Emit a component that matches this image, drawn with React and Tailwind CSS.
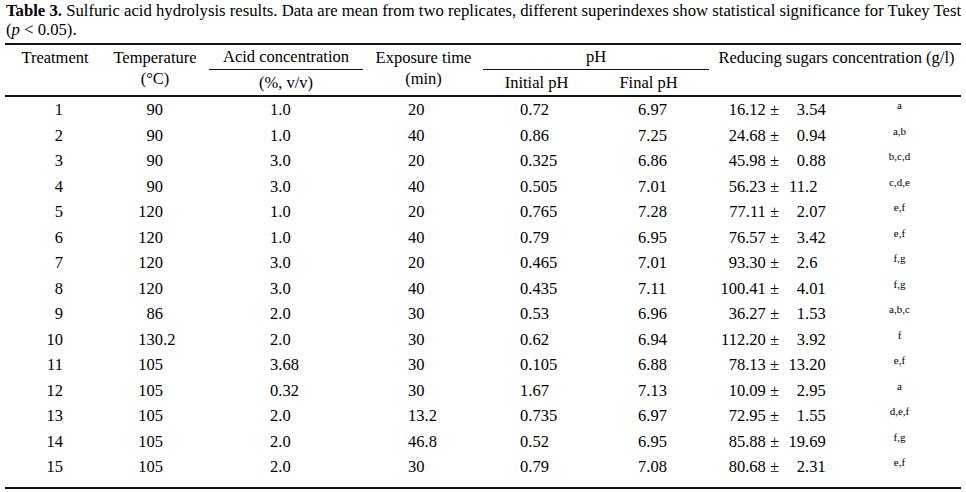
const cols = 'grid grid-cols-[100px_100px_162px_113px_113px_119px_249px]';

const rows = [
  ['1', '90', '1.0', '20', '0.72', '6.97', '16.12', '3.54', 'a'],
  ['2', '90', '1.0', '40', '0.86', '7.25', '24.68', '0.94', 'a,b'],
  ['3', '90', '3.0', '20', '0.325', '6.86', '45.98', '0.88', 'b,c,d'],
  ['4', '90', '3.0', '40', '0.505', '7.01', '56.23', '11.2', 'c,d,e'],
  ['5', '120', '1.0', '20', '0.765', '7.28', '77.11', '2.07', 'e,f'],
  ['6', '120', '1.0', '40', '0.79', '6.95', '76.57', '3.42', 'e,f'],
  ['7', '120', '3.0', '20', '0.465', '7.01', '93.30', '2.6', 'f,g'],
  ['8', '120', '3.0', '40', '0.435', '7.11', '100.41', '4.01', 'f,g'],
  ['9', '86', '2.0', '30', '0.53', '6.96', '36.27', '1.53', 'a,b,c'],
  ['10', '130.2', '2.0', '30', '0.62', '6.94', '112.20', '3.92', 'f'],
  ['11', '105', '3.68', '30', '0.105', '6.88', '78.13', '13.20', 'e,f'],
  ['12', '105', '0.32', '30', '1.67', '7.13', '10.09', '2.95', 'a'],
  ['13', '105', '2.0', '13.2', '0.735', '6.97', '72.95', '1.55', 'd,e,f'],
  ['14', '105', '2.0', '46.8', '0.52', '6.95', '85.88', '19.69', 'f,g'],
  ['15', '105', '2.0', '30', '0.79', '7.08', '80.68', '2.31', 'e,f'],
];

// splits "130.2" into "130" and ".2" so the points line up
const split = (v) => {
  const i = v.indexOf('.');
  return i < 0 ? [v, ''] : [v.slice(0, i), v.slice(i)];
};

const Row = ({ r }) => {
  const [t, temp, acid, time, ph0, ph1, mean, sd, sup] = r;
  const [ti, tf] = split(temp);
  const [si, sf] = split(sd);
  return (
    <div className={`${cols} h-[25.5px] leading-[25.5px]`}>
      <div className="text-right pr-[42px]">{t}</div>
      <div className="flex">
        <span className="w-[58px] text-right">{ti}</span>
        <span>{tf}</span>
      </div>
      <div className="pl-[65px]">{acid}</div>
      <div className="pl-[41px]">{time}</div>
      <div className="pl-[40px]">{ph0}</div>
      <div className="pl-[45px]">{ph1}</div>
      <div className="flex">
        <span className="w-[67px] text-right whitespace-nowrap">{mean} ±</span>
        <span className="w-[26px] text-right">{si}</span>
        <span className="w-[30px]">{sf}</span>
        <span className="flex-1 text-center text-[11px] leading-[11px] mt-[3px] pl-[3px]">{sup}</span>
      </div>
    </div>
  );
};

export default function App() {
  return (
    <div className="font-serif">
      <div className="w-[966px] h-[492px] bg-white text-black font-[family-name:Liberation_Serif,serif] text-[16.5px] overflow-hidden">
        <div className="pl-[6px] pt-[1px] leading-[19px] whitespace-nowrap text-[16.7px]">
          <b>Table 3.</b> Sulfuric acid hydrolysis results. Data are mean from two replicates, different superindexes show statistical significance for Tukey Test
          <br />
          (<i>p</i> &lt; 0.05).
        </div>

        <div className="ml-[5px] w-[956px] mt-[4px] border-t-2 border-b-2 border-[#111] pb-[7px]">
          <div className={`${cols} border-b-2 border-[#111]`}>
            <div className="row-span-2 col-start-1 row-start-1 text-center pt-[2px] leading-[21px]">Treatment</div>
            <div className="row-span-2 col-start-2 row-start-1 text-center pt-[2px] leading-[21px]">
              Temperature
              <br />
              (°C)
            </div>
            <div className="col-start-3 row-start-1 mx-[4px] h-[25px] leading-[24px] text-center border-b border-[#111]">
              Acid concentration
            </div>
            <div className="row-span-2 col-start-4 row-start-1 text-center pt-[2px] leading-[21px]">
              Exposure time
              <br />
              (min)
            </div>
            <div className="col-span-2 col-start-5 row-start-1 mx-[3px] h-[25px] leading-[24px] text-center border-b border-[#111]">
              pH
            </div>
            <div className="row-span-2 col-start-7 row-start-1 text-center pt-[2px] leading-[21px]">
              Reducing sugars concentration (g/l)
            </div>
            <div className="col-start-3 row-start-2 h-[25px] leading-[25px] text-center">(%, v/v)</div>
            <div className="col-start-5 row-start-2 h-[25px] leading-[25px] text-center">Initial pH</div>
            <div className="col-start-6 row-start-2 h-[25px] leading-[25px] text-center pr-[8px]">Final pH</div>
          </div>

          <div className="flex flex-col">
            {rows.map((r) => (
              <Row key={r[0]} r={r} />
            ))}
          </div>
        </div>
      </div>
    </div>
  );
}
